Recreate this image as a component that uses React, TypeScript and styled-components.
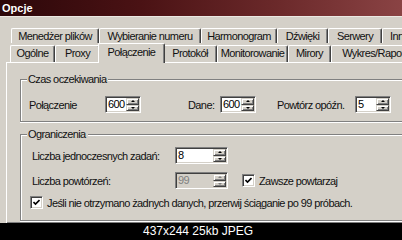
import React from 'react';
import styled, { createGlobalStyle, css } from 'styled-components';

const FACE = '#d4d0c8';
const SHADOW = '#808080';
const DARK = '#404040';

const GlobalStyle = createGlobalStyle`
  html, body {
    margin: 0;
    padding: 0;
    background: ${FACE};
  }
  #root {
    width: 402px;
    height: 240px;
    overflow: hidden;
  }
  * {
    box-sizing: border-box;
  }
`;

const Screen = styled('div')`
  display: flex;
  flex-direction: column;
  width: 402px;
  height: 240px;
  overflow: hidden;
  font-family: 'Liberation Sans', Arial, sans-serif;
  font-size: 11px;
  letter-spacing: -0.6px;
  color: #111;
`;

const TitleBar = styled('div')`
  flex: none;
  height: 17px;
  padding: 1px 0 0 2px;
  background: linear-gradient(90deg, #2c0709 0%, #4a1214 35%, #6c2a2b 70%, #8a4344 100%);
  border-bottom: 1px solid #ece9e3;
  color: #fff;
  font-weight: bold;
  font-size: 11px;
  letter-spacing: 0;
  line-height: 14px;
`;

const Body = styled('div')`
  flex: 1;
  display: flex;
  flex-direction: column;
  width: 470px;
  padding: 11px 0 0 6px;
  overflow: hidden;
`;

const TabRow = styled('div')<{ $indent: number }>`
  display: flex;
  align-items: flex-end;
  padding-left: ${(p) => p.$indent}px;
`;

const Tab = styled('div')<{ $w: number; $h: number; $active?: boolean }>`
  flex: none;
  width: ${(p) => p.$w}px;
  height: ${(p) => p.$h}px;
  border-top: 1px solid #fff;
  border-left: 1px solid #fff;
  border-right: 1px solid ${DARK};
  border-top-left-radius: 2px;
  border-top-right-radius: 2px;
  box-shadow: inset -1px 0 0 ${SHADOW};
  background: ${FACE};
  text-align: center;
  white-space: nowrap;
  overflow: hidden;
  line-height: 13px;
  padding-top: 1px;

  ${(p) =>
    p.$active &&
    css`
      position: relative;
      z-index: 1;
      margin: 0 -2px -1px -2px;
      padding-top: 2px;
    `}
`;

const Panel = styled('div')`
  border-top: 1px solid #fff;
  border-left: 1px solid #fff;
  border-bottom: 1px solid ${DARK};
  box-shadow: inset 0 -1px 0 ${SHADOW};
  padding: 16px 0 2px 13px;
  display: flex;
  flex-direction: column;
  gap: 12px;
`;

const Group = styled('div')`
  position: relative;
  border: 1px solid ${SHADOW};
  border-right: none;
  box-shadow: inset 1px 1px 0 #fff, 0 1px 0 #fff;
  display: flex;
  flex-direction: column;
`;

const Legend = styled('span')`
  position: absolute;
  top: -7px;
  left: 6px;
  padding: 0 2px 0 1px;
  background: ${FACE};
  line-height: 12px;
`;

const Row = styled('div')<{ $gap?: number; $indent?: number; $after?: number }>`
  display: flex;
  align-items: center;
  height: 17px;
  margin-top: ${(p) => p.$gap ?? 0}px;
  margin-bottom: ${(p) => p.$after ?? 0}px;
  padding-left: ${(p) => p.$indent ?? 0}px;
`;

const Label = styled('span')<{ $w?: number; $ml?: number }>`
  flex: none;
  width: ${(p) => (p.$w ? `${p.$w}px` : 'auto')};
  margin-left: ${(p) => p.$ml ?? 0}px;
  white-space: nowrap;
`;

const SpinBox = styled('div')<{ $w: number; $disabled?: boolean }>`
  flex: none;
  display: flex;
  width: ${(p) => p.$w}px;
  height: 17px;
  border-top: 1px solid ${SHADOW};
  border-left: 1px solid ${SHADOW};
  border-right: 1px solid #fff;
  border-bottom: 1px solid #fff;
  box-shadow: inset 1px 1px 0 ${DARK}, inset -1px -1px 0 ${FACE};
  background: ${(p) => (p.$disabled ? FACE : '#fff')};
  color: ${(p) => (p.$disabled ? SHADOW : '#000')};
`;

const SpinValue = styled('span')`
  flex: 1;
  padding: 1px 0 0 2px;
  line-height: 13px;
  overflow: hidden;
`;

const SpinButtons = styled('div')`
  flex: none;
  width: 13px;
  display: flex;
  flex-direction: column;
  margin: 1px 1px 1px 0;
`;

const SpinButton = styled('div')<{ $down?: boolean; $disabled?: boolean }>`
  flex: 1;
  display: flex;
  align-items: center;
  justify-content: center;
  background: ${FACE};
  border-top: 1px solid ${FACE};
  border-left: 1px solid ${FACE};
  border-right: 1px solid ${DARK};
  border-bottom: 1px solid ${DARK};
  box-shadow: inset 1px 1px 0 #fff, inset -1px -1px 0 ${SHADOW};

  &::after {
    content: '';
    width: 0;
    height: 0;
    border-left: 2px solid transparent;
    border-right: 2px solid transparent;
    ${(p) =>
      p.$down
        ? css`
            border-top: 2px solid ${p.$disabled ? SHADOW : '#000'};
          `
        : css`
            border-bottom: 2px solid ${p.$disabled ? SHADOW : '#000'};
          `}
  }
`;

const Check = styled('span')<{ $ml?: number }>`
  flex: none;
  display: inline-flex;
  align-items: center;
  justify-content: center;
  width: 13px;
  height: 13px;
  margin-left: ${(p) => p.$ml ?? 0}px;
  margin-right: 4px;
  background: #fff;
  border-top: 1px solid ${SHADOW};
  border-left: 1px solid ${SHADOW};
  border-right: 1px solid #fff;
  border-bottom: 1px solid #fff;
  box-shadow: inset 1px 1px 0 ${DARK}, inset -1px -1px 0 ${FACE};
`;

const Caption = styled('div')`
  flex: none;
  height: 17px;
  background: #000;
  color: #fff;
  text-align: center;
  font-family: 'Liberation Sans', Arial, sans-serif;
  font-size: 12px;
  letter-spacing: 0;
  line-height: 16px;
  padding-right: 6px;
`;

const backTabs = [
  { label: 'Menedżer plików', w: 88 },
  { label: 'Wybieranie numeru', w: 102 },
  { label: 'Harmonogram', w: 76 },
  { label: 'Dźwięki', w: 51 },
  { label: 'Serwery', w: 54 },
  { label: 'Inne', w: 35 },
];

const frontTabs = [
  { label: 'Ogólne', w: 45 },
  { label: 'Proxy', w: 45 },
  { label: 'Połączenie', w: 67, active: true },
  { label: 'Protokół', w: 54 },
  { label: 'Monitorowanie', w: 71 },
  { label: 'Mirory', w: 43 },
  { label: 'Wykres/Raporty', w: 92 },
];

function Spin({ value, w, disabled }: { value: string; w: number; disabled?: boolean }) {
  return (
    <SpinBox $w={w} $disabled={disabled}>
      <SpinValue>{value}</SpinValue>
      <SpinButtons>
        <SpinButton $disabled={disabled} />
        <SpinButton $down $disabled={disabled} />
      </SpinButtons>
    </SpinBox>
  );
}

function CheckBox({ ml }: { ml?: number }) {
  return (
    <Check $ml={ml}>
      <svg width="7" height="7" viewBox="0 0 7 7">
        <path d="M0.5 3 L2.5 5 L6.5 1" fill="none" stroke="#000" strokeWidth="1.6" />
      </svg>
    </Check>
  );
}

export default function App() {
  return (
    <Screen>
      <GlobalStyle />
      <TitleBar>Opcje</TitleBar>
      <Body>
        <TabRow $indent={5}>
          {backTabs.map((t) => (
            <Tab key={t.label} $w={t.w} $h={15}>
              {t.label}
            </Tab>
          ))}
        </TabRow>
        <TabRow $indent={4}>
          {frontTabs.map((t) => (
            <Tab key={t.label} $w={t.w} $h={t.active ? 20 : 17} $active={t.active}>
              {t.label}
            </Tab>
          ))}
        </TabRow>
        <Panel>
          <Group>
            <Legend>Czas oczekiwania</Legend>
            <Row $gap={16} $after={8} $indent={8}>
              <Label $w={76}>Połączenie</Label>
              <Spin value="600" w={36} />
              <Label $w={32} $ml={47}>
                Dane:
              </Label>
              <Spin value="600" w={36} />
              <Label $w={78} $ml={21}>
                Powtórz opóźn.
              </Label>
              <Spin value="5" w={36} />
            </Row>
          </Group>
          <Group>
            <Legend>Ograniczenia</Legend>
            <Row $gap={12} $indent={11}>
              <Label $w={143}>Liczba jednoczesnych zadań:</Label>
              <Spin value="8" w={53} />
            </Row>
            <Row $gap={8} $indent={11}>
              <Label $w={143}>Liczba powtórzeń:</Label>
              <Spin value="99" w={53} disabled />
              <CheckBox ml={14} />
              <Label>Zawsze powtarzaj</Label>
            </Row>
            <Row $gap={5} $after={9} $indent={9}>
              <CheckBox />
              <Label>Jeśli nie otrzymano żadnych danych, przerwij ściąganie po 99 próbach.</Label>
            </Row>
          </Group>
        </Panel>
      </Body>
      <Caption>437x244 25kb JPEG</Caption>
    </Screen>
  );
}
